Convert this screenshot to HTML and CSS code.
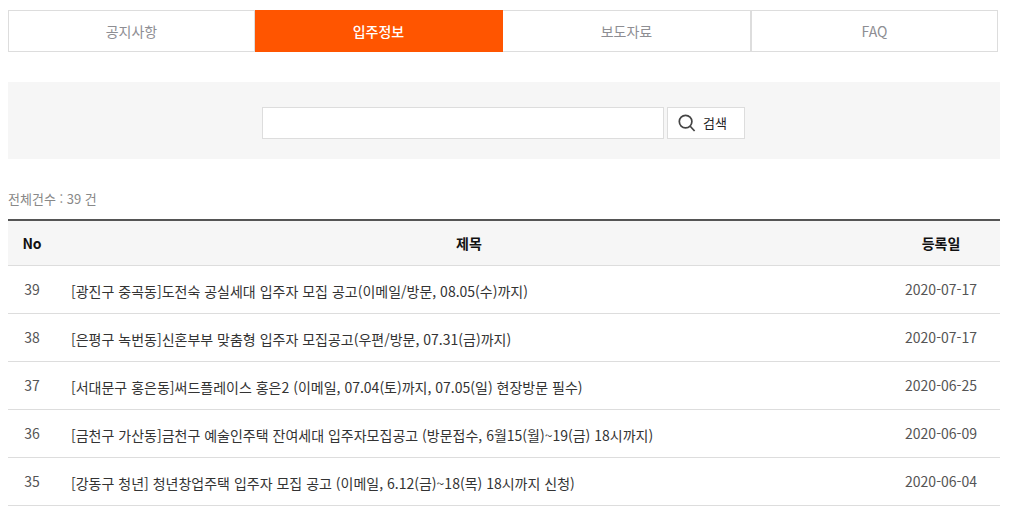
FILE: index.html
```html
<!DOCTYPE html>
<html lang="ko">
<head>
    <meta charset="UTF-8">
    <title>입주정보</title>
    <link rel="stylesheet" href="styles.css">
</head>
<body>
    <ul class="tabs">
        <li><a href="#">공지사항</a></li>
        <li class="active"><a href="#">입주정보</a></li>
        <li><a href="#">보도자료</a></li>
        <li><a href="#">FAQ</a></li>
    </ul>

    <form class="search-box">
        <input type="text" class="search-input">
        <button type="button" class="search-btn">
            <svg width="18" height="18" viewBox="0 0 18 18" fill="none" stroke="#444" stroke-width="1.7">
                <circle cx="7.6" cy="7.6" r="6.3"/>
                <path d="M12.2 12.2L16.6 17"/>
            </svg>
            <span>검색</span>
        </button>
    </form>

    <p class="total">전체건수 : 39 건</p>

    <table class="board">
        <thead>
            <tr>
                <th class="col-no">No</th>
                <th>제목</th>
                <th class="col-date">등록일</th>
            </tr>
        </thead>
        <tbody>
            <tr>
                <td class="num">39</td>
                <td class="title"><a href="#">[광진구 중곡동]도전숙 공실세대 입주자 모집 공고(이메일/방문, 08.05(수)까지)</a></td>
                <td class="date">2020-07-17</td>
            </tr>
            <tr>
                <td class="num">38</td>
                <td class="title"><a href="#">[은평구 녹번동]신혼부부 맞춤형 입주자 모집공고(우편/방문, 07.31(금)까지)</a></td>
                <td class="date">2020-07-17</td>
            </tr>
            <tr>
                <td class="num">37</td>
                <td class="title"><a href="#">[서대문구 홍은동]써드플레이스 홍은2 (이메일, 07.04(토)까지, 07.05(일) 현장방문 필수)</a></td>
                <td class="date">2020-06-25</td>
            </tr>
            <tr>
                <td class="num">36</td>
                <td class="title"><a href="#">[금천구 가산동]금천구 예술인주택 잔여세대 입주자모집공고 (방문접수, 6월15(월)~19(금) 18시까지)</a></td>
                <td class="date">2020-06-09</td>
            </tr>
            <tr>
                <td class="num">35</td>
                <td class="title"><a href="#">[강동구 청년] 청년창업주택 입주자 모집 공고 (이메일, 6.12(금)~18(목) 18시까지 신청)</a></td>
                <td class="date">2020-06-04</td>
            </tr>
        </tbody>
    </table>
</body>
</html>
```

FILE: styles.css
```css
* {
    margin: 0;
    padding: 0;
    box-sizing: border-box;
    font-family: "Noto Sans CJK KR", "Noto Sans", sans-serif;
}

body {
    background-color: #fff;
    color: #333;
    font-size: 14px;
    padding: 10px 11px 0 8px;
    overflow: hidden;
}

a {
    color: inherit;
    text-decoration: none;
}

.tabs {
    display: grid;
    grid-template-columns: 247px 248px 248px 247px;
    width: 990px;
    height: 42px;
    list-style: none;
}

.tabs li {
    border: 1px solid #ddd;
    border-left: 0;
    color: #8e8e93;
    font-size: 14px;
    line-height: 40px;
    text-align: center;
}

.tabs li:first-child {
    border-left: 1px solid #ddd;
}

.tabs li:last-child {
    border-left: 1px solid #ddd;
}

.tabs li.active {
    background-color: #ff5500;
    border-color: #ff5500;
    color: #fff;
    font-weight: 500;
}

.search-box {
    display: flex;
    justify-content: center;
    align-items: center;
    gap: 3px;
    width: 992px;
    height: 77px;
    margin-top: 30px;
    padding: 4px 1px 0 0;
    background-color: #f6f6f6;
}

.search-input {
    width: 402px;
    height: 32px;
    background-color: #fff;
    border: 1px solid #ddd;
}

.search-btn {
    display: flex;
    align-items: center;
    gap: 7px;
    width: 78px;
    height: 32px;
    padding-left: 10px;
    background-color: #fff;
    border: 1px solid #ddd;
    color: #222;
    font-size: 13px;
}

.total {
    margin-top: 29px;
    color: #888;
    font-size: 13px;
    line-height: 22px;
}

.board {
    width: 992px;
    margin-top: 9px;
    border-collapse: collapse;
    border-top: 2px solid #555;
    table-layout: fixed;
}

.board th {
    height: 45px;
    background-color: #f6f6f6;
    border-bottom: 1px solid #ddd;
    color: #111;
    font-size: 14px;
    font-weight: 700;
}

.col-no {
    width: 48px;
}

.col-date {
    width: 118px;
}

.board td {
    height: 48px;
    border-bottom: 1px solid #ddd;
    font-size: 14px;
}

.board .num,
.board .date {
    color: #555;
    text-align: center;
}

.board .title {
    padding-left: 15px;
    padding-top: 3px;
    color: #333;
}
```
